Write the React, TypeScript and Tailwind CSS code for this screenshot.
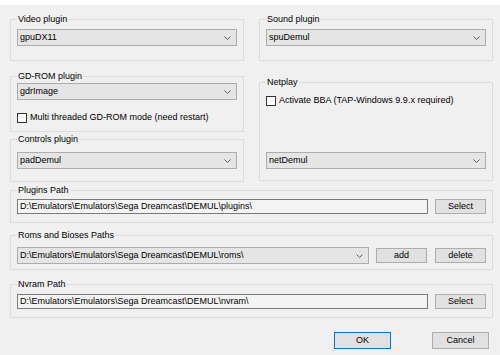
import type { ReactNode } from "react";

function Group({
  label,
  className,
  children,
}: {
  label: string;
  className?: string;
  children?: ReactNode;
}) {
  return (
    <div className={`flex flex-col border border-[#dcdcdc] px-[6px] ${className ?? ""}`}>
      <span className="-mt-[6px] w-fit bg-[#f0f0f0] px-[1px] leading-[11px]">{label}</span>
      {children}
    </div>
  );
}

function Chevron() {
  return (
    <svg width="7" height="4" viewBox="0 0 7 4" fill="none">
      <path d="M0.5 0.5 L3.5 3.5 L6.5 0.5" stroke="#606060" strokeWidth="1" />
    </svg>
  );
}

function Combo({ value, className }: { value: string; className?: string }) {
  return (
    <div
      className={`flex h-[17px] items-center justify-between border border-[#adadad] bg-[#e5e5e5] pl-[2px] pr-[5px] leading-none ${className ?? ""}`}
    >
      <span>{value}</span>
      <Chevron />
    </div>
  );
}

function Field({ value }: { value: string }) {
  return (
    <div className="flex h-[15px] flex-1 items-center border border-[#7a7a7a] bg-[#f4f4f4] pl-[2px] leading-none">
      {value}
    </div>
  );
}

function Button({ label }: { label: string }) {
  return (
    <div className="flex h-[15px] w-[51px] items-center justify-center border border-[#adadad] bg-[#e1e1e1] leading-none">
      {label}
    </div>
  );
}

function Check({ label, className }: { label: string; className?: string }) {
  return (
    <div className={`flex h-[11px] items-center gap-[3px] leading-none ${className ?? ""}`}>
      <div className="h-[10px] w-[10px] border border-[#333333] bg-white" />
      <span>{label}</span>
    </div>
  );
}

export default function App() {
  return (
    <div className="h-[355px] w-[500px] overflow-hidden bg-[#f0f0f0] font-['Liberation_Sans',Arial,sans-serif] text-[9px] text-black">
      <div className="h-[5px] bg-white" />
      <div className="pl-[10px] pr-[7px] pt-[14px]">
        <div className="flex gap-[15px]">
          {/* left column */}
          <div className="flex w-[234px] flex-col">
            <Group label="Video plugin" className="h-[42px]">
              <Combo value="gpuDX11" className="mt-[4px]" />
            </Group>
            <Group label="GD-ROM plugin" className="mt-[15px] h-[56px]">
              <Combo value="gdrImage" className="mt-[1px]" />
              <Check label="Multi threaded GD-ROM mode (need restart)" className="mt-[12px]" />
            </Group>
            <Group label="Controls plugin" className="mt-[7px] h-[43px]">
              <Combo value="padDemul" className="mt-[7px]" />
            </Group>
          </div>

          {/* right column */}
          <div className="flex w-[234px] flex-col">
            <Group label="Sound plugin" className="h-[42px]">
              <Combo value="spuDemul" className="mt-[4px]" />
            </Group>
            <Group label="Netplay" className="mt-[21px] h-[99px] pb-[11px]">
              <Check label="Activate BBA (TAP-Windows 9.9.x required)" className="mt-[7px]" />
              <Combo value="netDemul" className="mt-auto" />
            </Group>
          </div>
        </div>

        <Group label="Plugins Path" className="mt-[8px] h-[33px]">
          <div className="mt-[3px] flex items-center gap-[7px]">
            <Field value="D:\Emulators\Emulators\Sega Dreamcast\DEMUL\plugins\" />
            <Button label="Select" />
          </div>
        </Group>

        <Group label="Roms and Bioses Paths" className="mt-[12px] h-[35px]">
          <div className="mt-[6px] flex items-center">
            <Combo value="D:\Emulators\Emulators\Sega Dreamcast\DEMUL\roms\" className="w-[352px]" />
            <div className="ml-[7px]">
              <Button label="add" />
            </div>
            <div className="ml-[8px]">
              <Button label="delete" />
            </div>
          </div>
        </Group>

        <Group label="Nvram Path" className="mt-[14px] h-[34px]">
          <div className="mt-[4px] flex items-center gap-[7px]">
            <Field value="D:\Emulators\Emulators\Sega Dreamcast\DEMUL\nvram\" />
            <Button label="Select" />
          </div>
        </Group>

        <div className="mr-[4px] mt-[14px] flex justify-end gap-[41px]">
          <div className="flex h-[17px] w-[57px] items-center justify-center border border-[#0078d7] bg-[#e1e1e1] leading-none">
            OK
          </div>
          <div className="flex h-[17px] w-[57px] items-center justify-center border border-[#adadad] bg-[#e1e1e1] leading-none">
            Cancel
          </div>
        </div>
      </div>
    </div>
  );
}
